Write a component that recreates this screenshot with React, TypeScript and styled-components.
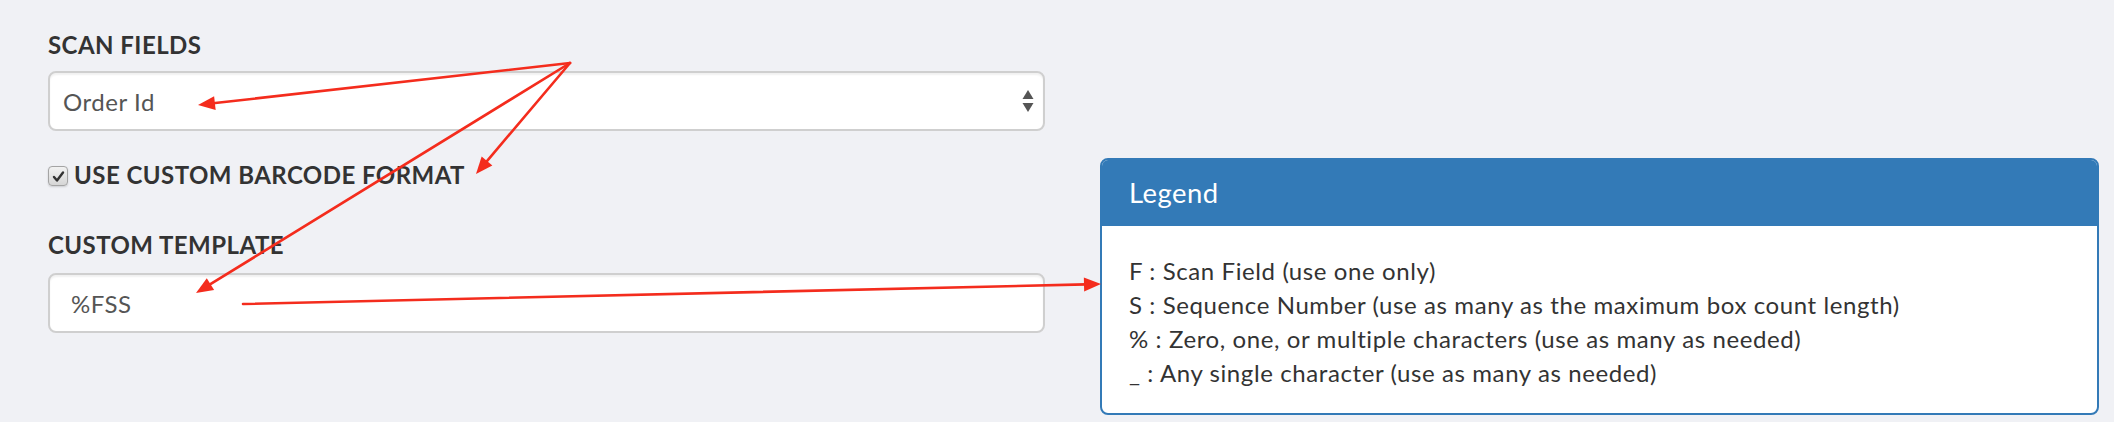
import React from "react";
import styled, { createGlobalStyle } from "styled-components";

const GlobalStyle = createGlobalStyle`
  html, body {
    margin: 0;
    padding: 0;
    background: #f0f1f5;
  }
  body {
    font-family: Lato, "Open Sans", "Liberation Sans", sans-serif;
    color: #333;
  }
  * { box-sizing: border-box; }
`;

const Page = styled.div`
  position: relative;
  width: 2114px;
  height: 422px;
  padding: 28px 15px 0 48px;
  display: flex;
  flex-direction: column;
  gap: 27px;
`;

const Column = styled.div<{ $w: number }>`
  width: ${(p) => p.$w}px;
  display: flex;
  flex-direction: column;
`;

const Row = styled.div`
  display: flex;
  align-items: flex-start;
  gap: 55px;
`;

const FormGroup = styled.div<{ $gap: number; $top?: number }>`
  display: flex;
  flex-direction: column;
  gap: ${(p) => p.$gap}px;
  margin-top: ${(p) => p.$top ?? 0}px;
`;

const Label = styled.label`
  font-size: 24px;
  line-height: 34px;
  font-weight: 700;
  color: #333;
  text-transform: uppercase;
  letter-spacing: 0.45px;
`;

const Field = styled.div<{ $padLeft: number }>`
  height: 60px;
  display: flex;
  align-items: center;
  justify-content: space-between;
  background: #fff;
  border: 2px solid #cfcfcf;
  border-radius: 8px;
  box-shadow: inset 0 2px 2px rgba(0, 0, 0, 0.06);
  padding: 0 9px 0 ${(p) => p.$padLeft}px;
  font-size: 24px;
  letter-spacing: 0.55px;
  color: #555;
`;

const CheckRow = styled.div`
  display: flex;
  align-items: center;
  gap: 6px;
  height: 34px;
`;

const CheckBox = styled.span`
  width: 20px;
  height: 20px;
  margin-top: 2px;
  border: 1px solid #a4a4a4;
  border-radius: 4px;
  background: linear-gradient(#f2f2f2, #d6d6d6);
  display: flex;
  align-items: center;
  justify-content: center;
  box-shadow: 0 1px 2px rgba(0, 0, 0, 0.15);
`;

const Panel = styled.div`
  width: 999px;
  border: 2px solid #337ab7;
  border-radius: 8px;
  background: #fff;
  overflow: hidden;
`;

const PanelHeading = styled.div`
  background: #337ab7;
  color: #fff;
  padding: 18px 27px;
  height: 66px;
`;

const PanelTitle = styled.h3`
  margin: 0;
  font-size: 27.4px;
  line-height: 30px;
  font-weight: 400;
  letter-spacing: 0.5px;
`;

const PanelBody = styled.div`
  padding: 28px 27px 23px;
  font-size: 24px;
  line-height: 34px;
  letter-spacing: 0.6px;
  color: #333;
`;

const Overlay = styled.svg`
  position: absolute;
  left: 0;
  top: 0;
  pointer-events: none;
`;

const SelectArrows = () => (
  <svg width="12" height="23" viewBox="0 0 12 23">
    <polygon points="6,0 11.5,9 0.5,9" fill="#555" />
    <polygon points="0.5,13 11.5,13 6,22" fill="#555" />
  </svg>
);

const Check = () => (
  <svg width="13" height="13" viewBox="0 0 13 13">
    <path d="M2 7 L5 10.5 L11 2.5" fill="none" stroke="#333" strokeWidth="2.4" strokeLinecap="round" strokeLinejoin="round" />
  </svg>
);

type Arrow = { x1: number; y1: number; x2: number; y2: number };

const arrows: Arrow[] = [
  { x1: 570, y1: 63, x2: 198, y2: 105 },
  { x1: 570, y1: 63, x2: 476, y2: 174 },
  { x1: 570, y1: 63, x2: 196, y2: 293 },
  { x1: 243, y1: 304, x2: 1101, y2: 284 },
];

const head = (a: Arrow) => {
  const dx = a.x2 - a.x1;
  const dy = a.y2 - a.y1;
  const len = Math.hypot(dx, dy);
  const ux = dx / len;
  const uy = dy / len;
  const L = 17;
  const W = 7;
  const bx = a.x2 - ux * L;
  const by = a.y2 - uy * L;
  return {
    pts: `${a.x2},${a.y2} ${bx - uy * W},${by + ux * W} ${bx + uy * W},${by - ux * W}`,
    lx: a.x2 - ux * (L - 2),
    ly: a.y2 - uy * (L - 2),
  };
};

const legendLines = [
  "F : Scan Field (use one only)",
  "S : Sequence Number (use as many as the maximum box count length)",
  "% : Zero, one, or multiple characters (use as many as needed)",
  "_ : Any single character (use as many as needed)",
];

export default function App() {
  return (
    <>
      <GlobalStyle />
      <Page>
        <Column $w={997}>
          <FormGroup $gap={9}>
            <Label>Scan Fields</Label>
            <Field $padLeft={13}>
              <span>Order Id</span>
              <SelectArrows />
            </Field>
          </FormGroup>
        </Column>
        <Row>
          <Column $w={997}>
            <CheckRow>
              <CheckBox>
                <Check />
              </CheckBox>
              <Label>Use custom barcode format</Label>
            </CheckRow>
            <FormGroup $gap={11} $top={36}>
              <Label>Custom Template</Label>
              <Field $padLeft={21}>
                <span>%FSS</span>
              </Field>
            </FormGroup>
          </Column>
          <Panel>
            <PanelHeading>
              <PanelTitle>Legend</PanelTitle>
            </PanelHeading>
            <PanelBody>
              {legendLines.map((l) => (
                <div key={l}>{l}</div>
              ))}
            </PanelBody>
          </Panel>
        </Row>
        <Overlay width="2114" height="422" viewBox="0 0 2114 422">
          {arrows.map((a, i) => {
            const h = head(a);
            return (
              <g key={i}>
                <line x1={a.x1} y1={a.y1} x2={h.lx} y2={h.ly} stroke="#f42c1d" strokeWidth="2.6" strokeLinecap="round" />
                <polygon points={h.pts} fill="#f42c1d" />
              </g>
            );
          })}
        </Overlay>
      </Page>
    </>
  );
}
